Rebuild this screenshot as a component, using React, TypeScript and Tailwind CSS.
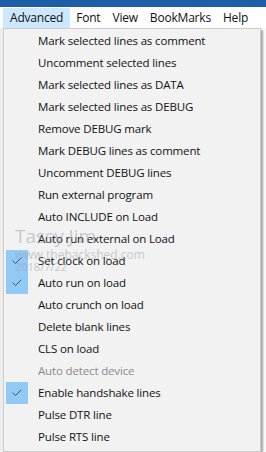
import { Check } from "lucide-react";

const items: { label: string; checked?: boolean; disabled?: boolean }[] = [
  { label: "Mark selected lines as comment" },
  { label: "Uncomment selected lines" },
  { label: "Mark selected lines as DATA" },
  { label: "Mark selected lines as DEBUG" },
  { label: "Remove DEBUG mark" },
  { label: "Mark DEBUG lines as comment" },
  { label: "Uncomment DEBUG lines" },
  { label: "Run external program" },
  { label: "Auto INCLUDE on Load" },
  { label: "Auto run external on Load" },
  { label: "Set clock on load", checked: true },
  { label: "Auto run on load", checked: true },
  { label: "Auto crunch on load" },
  { label: "Delete blank lines" },
  { label: "CLS on load" },
  { label: "Auto detect device", disabled: true },
  { label: "Enable handshake lines", checked: true },
  { label: "Pulse DTR line" },
  { label: "Pulse RTS line" },
];

const top = ["Advanced", "Font", "View", "BookMarks", "Help"];

export default function App() {
  return (
    <div
      className="w-[266px] h-[452px] bg-[#fbfbfb] overflow-hidden relative"
      style={{ fontFamily: '"Open Sans", "Noto Sans", sans-serif' }}
    >
      <div className="h-[7px] bg-[#1d5fa6]" />
      <div className="h-[21px] bg-white flex items-center pl-[3px] text-[12px] tracking-[-0.2px] text-[#111]">
        {top.map((t, i) => (
          <div
            key={t}
            className={
              i === 0
                ? "h-[20px] px-[7px] flex items-center bg-[#cce8ff]"
                : "h-[20px] px-[6px] flex items-center"
            }
          >
            {t}
          </div>
        ))}
      </div>
      <div className="flex">
        <div className="w-[3px] bg-[#ececec]" />
        <div className="w-[258px] bg-[#f2f2f2] border border-[#cccccc] shadow-[2px_2px_2px_rgba(0,0,0,0.35)] pt-[1px] pb-[3px] px-[2px]">
          {items.map((it) => (
            <div key={it.label} className="h-[22px] flex items-center">
              <div className="w-[22px] h-[22px] flex items-center justify-center">
                {it.checked ? (
                  <div className="w-[22px] h-[22px] bg-[#91c9f7] flex items-center justify-center">
                    <Check size={12} strokeWidth={1.6} color="#1a3550" />
                  </div>
                ) : null}
              </div>
              <span
                className={
                  it.disabled
                    ? "ml-[10px] text-[11.5px] tracking-[-0.15px] text-[#8a8a8a] whitespace-nowrap"
                    : "ml-[10px] text-[11.5px] tracking-[-0.15px] text-[#111] whitespace-nowrap"
                }
              >
                {it.label}
              </span>
            </div>
          ))}
        </div>
      </div>
      <div className="absolute left-[15px] top-[227px] text-[#9aa0a6] opacity-50 leading-none pointer-events-none">
        <div className="text-[19px]">Tassy Jim</div>
        <div className="text-[12px] mt-[3px]">www.thebackshed.com</div>
        <div className="text-[11px]">2018/7/22</div>
      </div>
    </div>
  );
}
